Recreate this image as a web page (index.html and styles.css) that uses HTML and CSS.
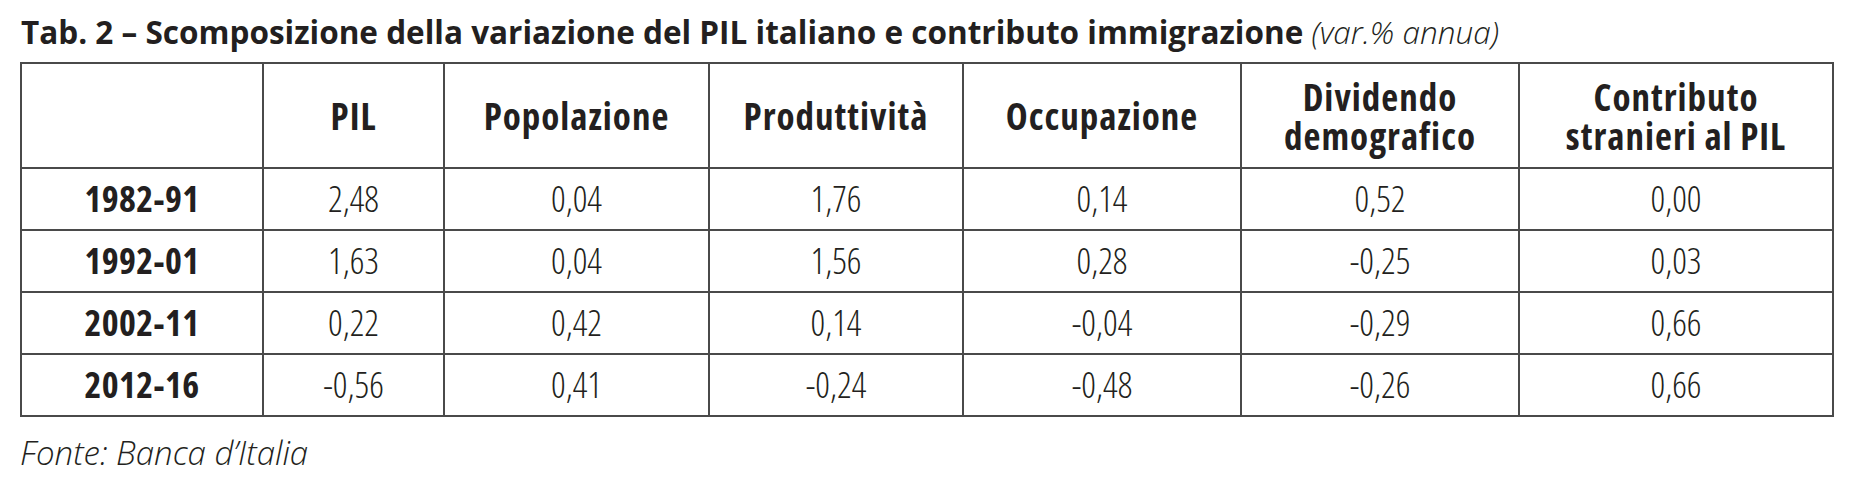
FILE: index.html
```html
<!DOCTYPE html>
<html lang="it">
<head>
<meta charset="utf-8">
<title>Tab. 2</title>
<link rel="stylesheet" href="styles.css">
</head>
<body>
<div class="page">
  <h1 class="title">Tab. 2 – Scomposizione della variazione del PIL italiano e contributo immigrazione <span class="unit">(var.% annua)</span></h1>
  <table class="data">
    <colgroup>
      <col class="c-year"><col class="c-pil"><col class="c-pop"><col class="c-prod"><col class="c-occ"><col class="c-div"><col class="c-con">
    </colgroup>
    <thead>
      <tr>
        <th></th>
        <th>PIL</th>
        <th>Popolazione</th>
        <th>Produttività</th>
        <th>Occupazione</th>
        <th>Dividendo<br>demografico</th>
        <th>Contributo<br>stranieri al PIL</th>
      </tr>
    </thead>
    <tbody>
      <tr><th>1982-91</th><td>2,48</td><td>0,04</td><td>1,76</td><td>0,14</td><td>0,52</td><td>0,00</td></tr>
      <tr><th>1992-01</th><td>1,63</td><td>0,04</td><td>1,56</td><td>0,28</td><td>-0,25</td><td>0,03</td></tr>
      <tr><th>2002-11</th><td>0,22</td><td>0,42</td><td>0,14</td><td>-0,04</td><td>-0,29</td><td>0,66</td></tr>
      <tr><th>2012-16</th><td>-0,56</td><td>0,41</td><td>-0,24</td><td>-0,48</td><td>-0,26</td><td>0,66</td></tr>
    </tbody>
  </table>
  <p class="source">Fonte: Banca d’Italia</p>
</div>
</body>
</html>
```

FILE: styles.css
```css
html, body {
  margin: 0;
  padding: 0;
  background: #ffffff;
}

.page {
  padding: 12px 0 0 20px;
  color: #231f20;
  font-family: "Open Sans", "DejaVu Sans", sans-serif;
  font-stretch: 75%;
}

.title {
  margin: 0 0 10px 1px;
  font-size: 31.5px;
  line-height: 40px;
  font-weight: 750;
  font-stretch: 100%;
  white-space: nowrap;
}

.title .unit {
  font-weight: 300;
  font-style: italic;
}

.data {
  border-collapse: collapse;
  table-layout: fixed;
  width: 1812px;
}

.c-year { width: 242px; }
.c-pil { width: 181px; }
.c-pop { width: 265px; }
.c-prod { width: 254px; }
.c-occ { width: 278px; }
.c-div { width: 278px; }
.c-con { width: 314px; }

.data th,
.data td {
  border: 2px solid #4a4a4a;
  text-align: center;
  vertical-align: middle;
  padding: 0;
  font-size: 36px;
}

.data thead th {
  height: 103px;
  line-height: 39px;
  font-size: 37px;
  font-weight: 750;
  letter-spacing: 1px;
}

.data tbody th,
.data tbody td {
  height: 60px;
  line-height: 40px;
}

.data tbody th {
  font-weight: 750;
  letter-spacing: 0.4px;
}

.data tbody td {
  font-weight: 300;
}

.source {
  margin: 16px 0 0 0;
  font-size: 33px;
  line-height: 40px;
  font-style: italic;
  font-weight: 300;
  font-stretch: 100%;
}
```
